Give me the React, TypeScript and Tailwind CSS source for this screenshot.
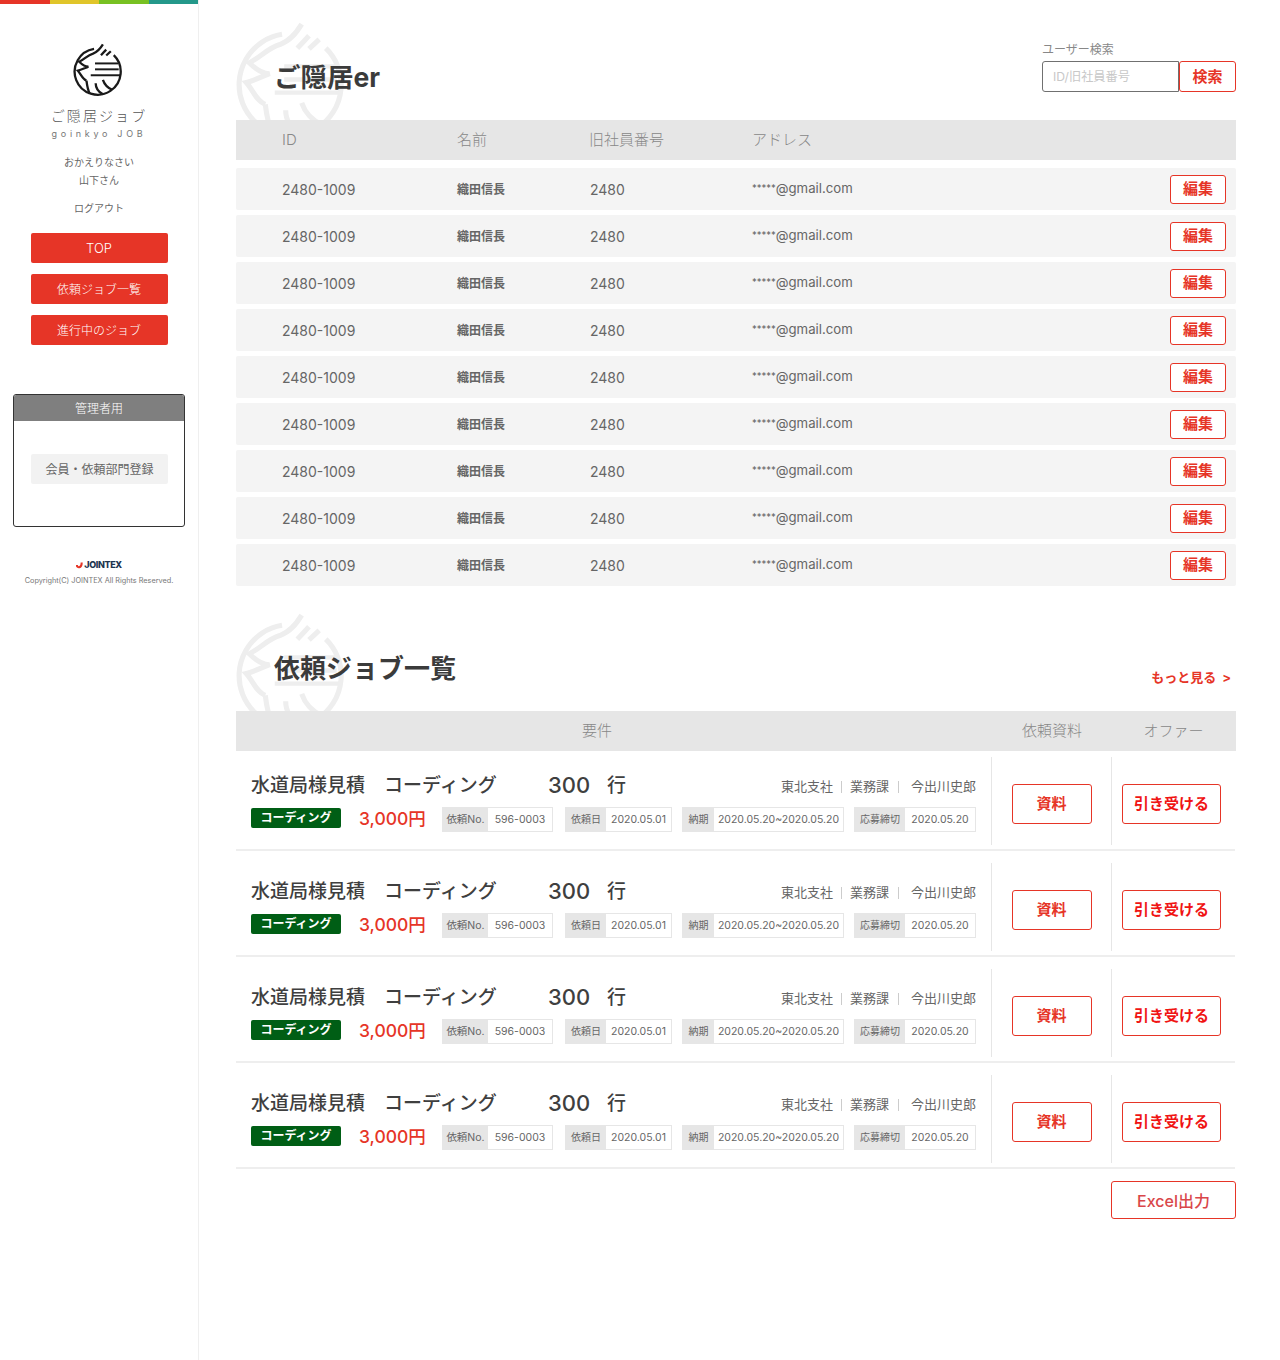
const users = Array.from({ length: 9 }, (_, i) => i)
const jobs = [0, 1, 2, 3]

function Logo({ className }: { className: string }) {
  return (
    <svg viewBox="215 125 155 170" fill="none" stroke="currentColor" strokeWidth="7" strokeLinecap="butt" className={className}>
      {/* ring, open at the top right */}
      <path d="M285 146 A70 70 0 1 0 345 165" />
      {/* long stroke that runs into the crest */}
      <path d="M312 132 C304 145 296 155 282 160 C265 165 255 178 240 185 C250 195 258 200 268 200 C255 205 245 210 236 212 C245 222 250 238 262 242" />
      <path d="M306 165 L322 148" />
      <path d="M322 166 L336 153" />
      {/* water lines */}
      <path d="M288 190 H358" strokeWidth="6" />
      <path d="M288 208 H360" strokeWidth="6" />
      <path d="M275 226 H365" strokeWidth="6" />
      {/* waves */}
      <path d="M262 242 C264 258 266 270 272 282" />
      <path d="M290 250 C290 264 298 276 312 284" />
      <path d="M312 240 C316 252 326 264 340 270" />
    </svg>
  )
}

function Sidebar() {
  return (
    <aside className="w-[199px] shrink-0 border-r border-[#efefef] min-h-[1360px]">
      <div className="flex h-1">
        <div className="w-[50px] bg-[#e63527]" />
        <div className="w-[49px] bg-[#e0c52a]" />
        <div className="w-[50px] bg-[#78c122]" />
        <div className="w-[49px] bg-[#24988a]" />
      </div>
      <div className="flex flex-col items-center">
        <Logo className="w-[51px] h-[56px] mt-[38px] ml-[-5px] text-[#1a1a1a]" />
        <p className="mt-[8px] text-[14px] leading-[20px] tracking-[2.1px] text-[#555] font-light">ご隠居ジョブ</p>
        <p className="mt-[1px] text-[9px] leading-[14px] tracking-[3.7px] text-[#777]">goinkyo JOB</p>
        <p className="mt-[12px] text-[10px] leading-[18px] text-[#666] text-center">
          おかえりなさい
          <br />
          山下さん
        </p>
        <p className="mt-[10px] text-[10px] leading-[18px] text-[#666]">ログアウト</p>
        <div className="mt-[16px] flex flex-col gap-[11px]">
          <SideButton label="TOP" />
          <SideButton label="依頼ジョブ一覧" />
          <SideButton label="進行中のジョブ" />
        </div>
      </div>
      <div className="mx-[13px] mt-[49px] h-[133px] w-[172px] rounded-[3px] border border-[#333] overflow-hidden">
        <div className="h-[26px] bg-[#7f7f7f] text-white text-[12px] font-light leading-[28px] text-center">管理者用</div>
        <div className="ml-[17px] mr-[16px] mt-[33px] h-[30px] bg-[#f2f2f2] rounded-[2px] text-[12px] leading-[32px] text-[#666] text-center">
          会員・依頼部門登録
        </div>
      </div>
      <div className="mt-[32px] flex flex-col items-center">
        <div className="flex items-center gap-[1px] h-[12px]">
          <svg viewBox="0 0 8 8" className="w-[7px] h-[8px]" fill="none" stroke="#e63527" strokeWidth="2.4">
            <path d="M1 4 C1 7.5 6.5 8 6.5 1" />
          </svg>
          <span className="text-[9px] font-extrabold tracking-[-0.4px] text-[#1d3550]">JOINTEX</span>
        </div>
        <p className="mt-[4px] text-[7.3px] leading-[12px] text-[#777]">Copyright(C) JOINTEX All Rights Reserved.</p>
      </div>
    </aside>
  )
}

function SideButton({ label }: { label: string }) {
  return (
    <div className={`w-[137px] h-[30px] rounded-[2px] bg-[#e63527] text-white font-light leading-[31px] text-center ${label === "TOP" ? "text-[13px]" : "text-[12px]"}`}>
      {label}
    </div>
  )
}

function OutlineButton({ label, className }: { label: string; className: string }) {
  return (
    <div className={`flex items-center justify-center pt-px border border-[#e63527] rounded-[3px] bg-white font-bold text-[#e63527] ${className}`}>
      {label}
    </div>
  )
}

function UserRow() {
  return (
    <div className="flex items-center h-[42px] bg-[#f4f4f4] rounded-[2px] text-[#666]">
      <span className="w-[175px] ml-[46px] text-[14px]">2480-1009</span>
      <span className="w-[133px] mt-[2px] text-[12px] font-bold">織田信長</span>
      <span className="w-[162px] text-[14px]">2480</span>
      <span className="text-[13.2px] leading-[16px] -mt-[3px]">
        <span className="text-[9.5px] align-[2px]">*****</span>@gmail.com
      </span>
      <OutlineButton label="編集" className="ml-auto mr-[10px] w-[56px] h-[29px] text-[15px]" />
    </div>
  )
}

function Chip({ label, value, labelWidth, width, labelClass }: { label: string; value: string; labelWidth: string; width: string; labelClass: string }) {
  return (
    <div className={`flex h-[25px] border border-[#e6e6e6] ${width}`}>
      <span className={`flex items-center justify-center pt-px bg-[#e6e6e6] text-[#666] ${labelClass} ${labelWidth}`}>{label}</span>
      <span className="flex-1 flex items-center justify-center pt-px text-[10.5px] text-[#666] whitespace-nowrap">{value}</span>
    </div>
  )
}

function JobRow() {
  return (
    <div className="border-b-2 border-[#eeeeee] mr-px pb-[4px] mb-[12px]">
      <div className="flex h-[88px]">
        <div className="w-[755px] pl-[15px] pr-[15px]">
          <div className="flex items-center h-[24px] mt-[17px] text-[#3f3f3f]">
            <span className="text-[19px] font-medium w-[133px]">水道局様見積</span>
            <span className="text-[19px] font-medium w-[164px]">コーディング</span>
            <span className="text-[22px] font-medium w-[59px] -mt-[2px]">300</span>
            <span className="text-[19px] font-medium">行</span>
            <div className="ml-auto flex items-center text-[13px] text-[#666] mt-[2px]">
              <span>東北支社</span>
              <span className="mx-[8px] w-px h-[12px] bg-[#ccc]" />
              <span>業務課</span>
              <span className="ml-[9px] mr-[12px] w-px h-[12px] bg-[#ccc]" />
              <span>今出川史郎</span>
            </div>
          </div>
          <div className="flex items-center mt-[8px]">
            <span className="-mt-[3px] w-[90px] h-[20px] rounded-[2px] bg-[#005e15] text-white text-[12px] font-bold leading-[20px] text-center">コーディング</span>
            <span className="w-[83px] ml-[18px] text-[17.5px] font-medium text-[#e63527]">3,000円</span>
            <div className="flex gap-[10px]">
              <div className="mr-[2px]"><Chip label="依頼No." value="596-0003" labelWidth="w-[45px]" width="w-[111px]" labelClass="text-[10.5px]" /></div>
              <Chip label="依頼日" value="2020.05.01" labelWidth="w-[40px]" width="w-[107px]" labelClass="text-[10px]" />
              <Chip label="納期" value="2020.05.20~2020.05.20" labelWidth="w-[31px]" width="w-[162px]" labelClass="text-[10px]" />
              <Chip label="応募締切" value="2020.05.20" labelWidth="w-[50px]" width="w-[122px]" labelClass="text-[10px]" />
            </div>
          </div>
        </div>
        <div className="w-[120px] pt-[6px] border-l border-[#e6e6e6] flex items-center justify-center">
          <OutlineButton label="資料" className="w-[80px] h-[40px] text-[15px]" />
        </div>
        <div className="flex-1 pt-[6px] border-l border-[#e6e6e6] pl-[10px] flex items-center">
          <OutlineButton label="引き受ける" className="w-[99px] h-[40px] text-[15px] !text-[#f01414]" />
        </div>
      </div>
    </div>
  )
}

export default function App() {
  return (
    <div className="flex w-[1280px] min-h-[1360px] bg-white font-['Inter','Noto_Sans_CJK_JP',sans-serif]">
      <Sidebar />
      <main className="w-[1037px] pl-[37px]">
        <section>
          <div className="relative h-[120px]">
            <Logo className="absolute left-[-5px] top-[19px] w-[113px] h-[124px] text-[#eeeeee]" />
            <h1 className="absolute left-[38px] top-[58px] text-[26.5px] leading-[38px] font-bold text-[#3b3b3b]">ご隠居er</h1>
            <div className="absolute right-0 top-[41px] w-[194px]">
              <p className="text-[12px] leading-[18px] text-[#888]">ユーザー検索</p>
              <div className="flex mt-[2px] h-[31px]">
                <div className="w-[137px] border border-[#707070] rounded-l-[3px] pl-[10px] text-[12.2px] leading-[30px] text-[#c8c8c8]">ID/旧社員番号</div>
                <OutlineButton label="検索" className="flex-1 text-[15px]" />
              </div>
            </div>
          </div>
          <div className="relative flex items-center h-[40px] bg-[#e6e6e6] text-[15px] font-light text-[#888]">
            <span className="w-[175px] ml-[46px]">ID</span>
            <span className="w-[132px]">名前</span>
            <span className="w-[163px]">旧社員番号</span>
            <span>アドレス</span>
          </div>
          <div className="mt-[8px] flex flex-col gap-[5px]">
            {users.map((u) => (
              <UserRow key={u} />
            ))}
          </div>
        </section>
        <section>
          <div className="relative h-[125px]">
            <Logo className="absolute left-[-5px] top-[24px] w-[113px] h-[124px] text-[#eeeeee]" />
            <h2 className="absolute left-[38px] top-[64px] text-[26px] leading-[38px] font-bold text-[#3b3b3b]">依頼ジョブ一覧</h2>
            <span className="absolute right-[5px] top-[82px] flex gap-[6px] text-[13px] leading-[18px] font-bold text-[#e63527]">
              <span>もっと見る</span>
              <span>&gt;</span>
            </span>
          </div>
          <div className="relative flex items-center h-[40px] bg-[#e6e6e6] text-[15px] font-light text-[#888] text-center">
            <span className="w-[722px]">要件</span>
            <span className="w-[120px] ml-[34px]">依頼資料</span>
            <span className="w-[121px] ml-[1px]">オファー</span>
          </div>
          <div className="mt-[6px]">
            {jobs.map((j) => (
              <JobRow key={j} />
            ))}
          </div>
          <div className="flex justify-end mt-[3px]">
            <OutlineButton label="Excel出力" className="w-[125px] h-[38px] text-[16px] !font-medium !text-[#d9474a]" />
          </div>
        </section>
      </main>
    </div>
  )
}
